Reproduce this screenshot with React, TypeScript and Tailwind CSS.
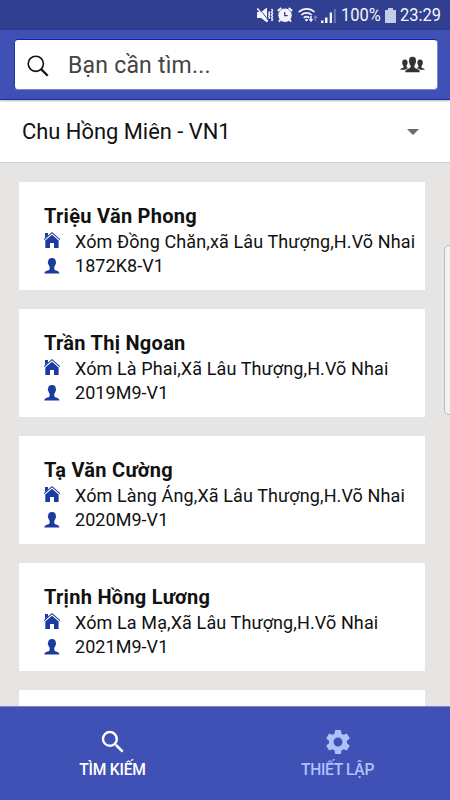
import { MdSearch, MdSettings } from 'react-icons/md';

const customers = [
  { name: 'Triệu Văn Phong', address: 'Xóm Đồng Chăn,xã Lâu Thượng,H.Võ Nhai', code: '1872K8-V1' },
  { name: 'Trần Thị Ngoan', address: 'Xóm Là Phai,Xã Lâu Thượng,H.Võ Nhai', code: '2019M9-V1' },
  { name: 'Tạ Văn Cường', address: 'Xóm Làng Áng,Xã Lâu Thượng,H.Võ Nhai', code: '2020M9-V1' },
  { name: 'Trịnh Hồng Lương', address: 'Xóm La Mạ,Xã Lâu Thượng,H.Võ Nhai', code: '2021M9-V1' },
];

function HomeIcon() {
  return (
    <svg viewBox="0 0 16 16" className="mb-[3px] h-4 w-4 shrink-0 text-[#1c3aa0]" fill="currentColor">
      <path d="M1 1h3v2.500L1 6.300z" />
      <path d="M0 7.700 8 .700 16 7.700" fill="none" stroke="currentColor" strokeWidth="1.100" />
      <path d="M8 2.800 14.600 8.500V16H10v-5H6v5H1.300V8.600z" />
    </svg>
  );
}

function PersonIcon() {
  return (
    <svg viewBox="0 0 16 16" className="h-4 w-4 shrink-0 text-[#1c3aa0]" fill="currentColor">
      <path d="M8 0c2.600 0 3.900 1.600 3.800 4 .5.200.4 1.400-.2 2-.2 1.200-.7 2.100-1.300 2.800v2.100c.3 1.100 1.300 1.400 2.600 1.800 1.500.5 2.300 1.100 2.500 2.800H.3c.2-1.700 1-2.300 2.500-2.800 1.300-.4 2.500-.7 2.800-1.800V8.800C5 8.100 4.500 7.200 4.300 6c-.6-.6-.7-1.800-.2-2C4 1.600 5.400 0 8 0z" />
    </svg>
  );
}

function PeopleIcon() {
  return (
    <svg viewBox="0 0 26 18" className="mt-px h-[18px] w-[25px]" fill="#333">
      <path d="M5 3.200c2.300 0 3.100 1.400 2.800 3.300.3.800 0 1.500-.4 1.900-.1.800-.5 1.300-.7 1.700 0 1 .4 1.500 1.800 2-1.500.5-2.500 1.100-3 1.900H.3c.2-1.400 1.300-1.500 2.700-1.900.8-.3.8-1 .5-2-.5-.5-.7-1.100-.8-1.700-.5-.5-.6-1.300-.3-1.900C2.100 4.600 2.900 3.200 5 3.200z" />
      <path d="M21 3.200c-2.300 0-3.100 1.400-2.800 3.300-.3.800 0 1.500.4 1.900.1.800.5 1.300.7 1.700 0 1-.4 1.500-1.800 2 1.500.5 2.500 1.100 3 1.900h5.200c-.2-1.400-1.300-1.500-2.700-1.900-.8-.3-.8-1-.5-2 .5-.5.7-1.100.8-1.700.5-.5.6-1.300.3-1.900.3-1.900-.5-3.300-2.600-3.300z" />
      <path d="M13 .5c2.700 0 3.900 1.700 3.500 4.200.5.4.3 1.600-.3 2.100-.2 1.300-.6 2-1.200 2.700v1.700c.3 1.200 1.500 1.600 2.900 2 1.700.5 2.500 1.200 2.700 3.300H5.400c.2-2.100 1-2.800 2.700-3.300 1.400-.4 2.600-.8 2.900-2V9.500c-.6-.7-1-1.400-1.200-2.700-.6-.5-.8-1.700-.3-2.100C9.100 2.200 10.300.5 13 .5z" />
    </svg>
  );
}

function StatusBar() {
  return (
    <div className="flex h-[30px] shrink-0 items-center bg-[#303f8f] pl-[257px] text-[#f4f5fb]">
      {/* muted with vibration */}
      <svg viewBox="0 0 17 16" className="h-4 w-[17px] shrink-0" fill="currentColor">
        <path d="M0 5h4l6-4.500v15L4 11H0z" />
        <path d="M1.200.5 11 12.700" stroke="#303f8f" strokeWidth="1" />
        <path d="m.3 1.500 10.500 13" stroke="currentColor" strokeWidth="1.500" />
        <path d="m11.700 4.500 1 1.200-1 1.200 1 1.200-1 1.200 1 1.200-1 1.200M14.500 2l1.100 1.500-1.100 1.500 1.100 1.500-1.100 1.500 1.100 1.500-1.100 1.500 1.100 1.500-1.100 1.500" fill="none" stroke="currentColor" strokeWidth="1.300" />
      </svg>
      {/* alarm */}
      <svg viewBox="0 0 16 16" className="ml-[3px] h-4 w-4 shrink-0" fill="currentColor">
        <circle cx="8" cy="8.300" r="6.700" />
        <path d="m.8 4 3.500-3M15.200 4l-3.500-3M3.500 12.500 2 14.700M12.500 12.500l1.500 2.200" stroke="currentColor" strokeWidth="2" />
        <path d="M7.700 5v3.700h3" fill="none" stroke="#303f8f" strokeWidth="1.300" />
      </svg>
      {/* wifi */}
      <svg viewBox="0 0 21 16" className="ml-[5px] h-4 w-[21px] shrink-0" fill="none" stroke="currentColor">
        <path d="M.8 5C5.500.8 12 .8 16.500 5M3.300 8c3-2.800 7.500-2.800 10.500 0M5.700 10.800c1.800-1.500 4-1.500 5.700 0" strokeWidth="1.700" />
        <circle cx="8.500" cy="13" r="1.300" fill="currentColor" stroke="none" />
        <path d="M13 9v4" strokeWidth="1.500" />
        <path d="M10.700 12h4.600L13 15.200z" fill="currentColor" stroke="none" />
        <path d="M15.300 11.300h4.200l-2.100-3.300zM16.800 11h1.200v3h-1.200z" fill="#7f89bf" stroke="none" />
      </svg>
      {/* signal */}
      <svg viewBox="0 0 16 15" className="ml-px h-[15px] w-4 shrink-0" fill="currentColor">
        <path d="M1 12.500h2.500V15H1zM5 9.500h2.500V15H5zM9.700 4.500H12V15H9.700z" />
        <path d="M13.700 1H16v14h-2.300z" fill="#6470ae" />
      </svg>
      <span className="ml-[5px] w-[40px] shrink-0 origin-left scale-x-90 whitespace-nowrap pt-px text-[18.300px] leading-none">100%</span>
      <svg viewBox="0 0 11 15" className="ml-[4px] h-[15px] w-[11px] shrink-0" fill="#c5cbe9">
        <path d="M3 0h5v2h3v13H0V2h3z" />
      </svg>
      <span className="ml-[4px] w-[42px] shrink-0 origin-left scale-x-[.9] whitespace-nowrap pt-px text-[18.300px] leading-none">23:29</span>
    </div>
  );
}

function CustomerCard({ name, address, code }: { name: string; address: string; code: string }) {
  return (
    <div className="h-[108px] shrink-0 bg-white pl-[25px] pt-[21px] text-[#111]">
      <h2 className="whitespace-nowrap text-[20px] font-bold leading-[26px] tracking-[0.28px]">{name}</h2>
      <div className="flex h-[25px] items-center gap-[15px]">
        <HomeIcon />
        <span className="whitespace-nowrap text-[18px] leading-[25px] tracking-[0.11px]">{address}</span>
      </div>
      <div className="flex h-[24px] items-center gap-[15px]">
        <PersonIcon />
        <span className="whitespace-nowrap text-[18px] leading-6 tracking-[0.05px]">{code}</span>
      </div>
    </div>
  );
}

export default function App() {
  return (
    <div className="relative flex h-[800px] w-[450px] flex-col overflow-hidden bg-[#e6e5e3] font-['Roboto',sans-serif]">
      <StatusBar />

      {/* Search */}
      <header className="z-10 h-[70px] shrink-0 border-b border-[#1a2fa5] bg-[#3f51b5] pl-[14px] pr-[12px] pt-[9px] shadow-[0_1px_2px_rgba(0,0,0,0.3)]">
        <div className="flex h-[51px] items-center rounded-[4px] border border-b-[#7a86d0] border-l-[#2434ac] border-r-[#7a86d0] border-t-[#1222a8] bg-white px-[12px]">
          <svg viewBox="0 0 22 22" className="mt-[2px] h-[22px] w-[22px]" fill="none" stroke="#111">
            <circle cx="8.800" cy="8.800" r="7.600" strokeWidth="1.600" />
            <path d="m14.200 14.200 6.500 6.500" strokeWidth="2.300" />
          </svg>
          <span className="ml-[19px] flex-1 whitespace-nowrap pt-[3px] text-[23px] tracking-[0.22px] text-[#444]">Bạn cần tìm...</span>
          <PeopleIcon />
        </div>
      </header>

      {/* Group select */}
      <div className="flex h-[63px] shrink-0 items-center justify-between border-b border-[#d0d0d0] bg-white pl-[22px] pr-[31px] text-[21.900px] text-[#111]">
        <span className="whitespace-nowrap pt-[2px]">Chu Hồng Miên - VN1</span>
        <svg viewBox="0 0 12 6" className="mt-px h-[6px] w-[12px]" fill="#6b6b6b">
          <path d="M0 0h12L6 6z" />
        </svg>
      </div>

      {/* Customer list */}
      <main className="flex min-h-0 flex-1 flex-col gap-[19px] overflow-hidden pl-[19px] pr-[25px] pt-[19px]">
        {customers.map((c) => (
          <CustomerCard key={c.code} {...c} />
        ))}
        <div className="h-[108px] shrink-0 bg-white" />
      </main>

      {/* Bottom tabs */}
      <nav className="grid h-[94px] shrink-0 grid-cols-2 border-t border-[#7b86c4] bg-[#3f51b5] text-[15.600px] font-medium">
        <div className="flex flex-col items-center pt-[20px] text-white">
          <MdSearch className="h-[30px] w-[30px]" />
          <span className="pt-px leading-6 tracking-[-0.2px]">TÌM KIẾM</span>
        </div>
        <div className="flex flex-col items-center pt-[20px] text-[#afc1fb]">
          <MdSettings className="h-[30px] w-[30px]" />
          <span className="pt-px leading-6 tracking-[-0.3px]">THIẾT LẬP</span>
        </div>
      </nav>

      {/* Edge panel handle */}
      <div className="absolute left-[444px] top-[245px] h-[170px] w-3 rounded-l-[5px] border border-[#bbb] bg-[#f2f2f2]" />
    </div>
  );
}
